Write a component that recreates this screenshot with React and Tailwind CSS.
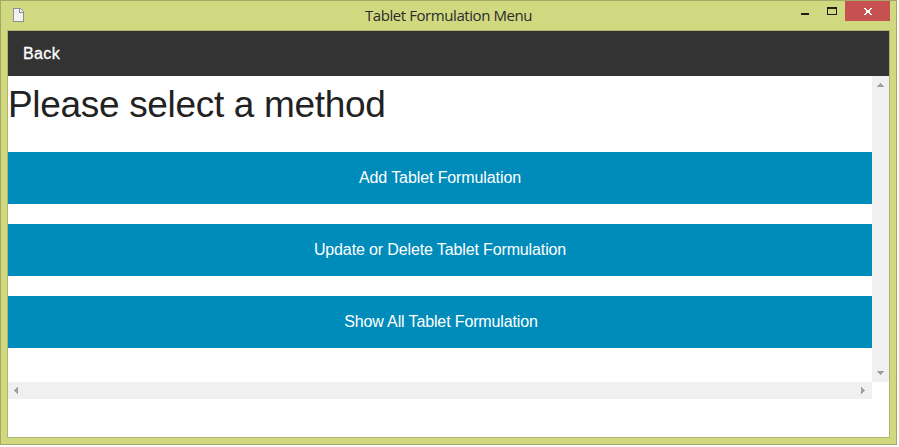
const actions = [
  { label: "Add Tablet Formulation", tracking: "tracking-[-0.1px]" },
  { label: "Update or Delete Tablet Formulation", tracking: "tracking-[-0.13px]" },
  { label: "Show All Tablet Formulation", tracking: "tracking-[-0.13px] pl-0.5" },
];

function TitleBar() {
  return (
    <header className="flex h-[29px] items-start">
      <div className="flex w-[132px] shrink-0 pt-[7px] pl-3">
        <svg width="11" height="14" viewBox="0 0 11 14" shapeRendering="crispEdges" aria-hidden="true">
          <path d="M0 0h7l4 4v10H0z" fill="#8f8f8f" />
          <path d="M1 1h5v4h4v8H1z" fill="#f2f2f2" />
          <path d="M7 1h1v1h1v1h1v1H7z" fill="#f2f2f2" />
        </svg>
      </div>
      <h1 className="flex-1 pt-1 pl-[6px] text-center font-['Open_Sans',sans-serif] text-[15px] leading-5 tracking-[-0.42px] whitespace-nowrap text-[#2b2b2b]">
        Tablet Formulation Menu
      </h1>
      <div className="flex h-5 w-[138px] shrink-0 justify-end pr-1.5">
        <button className="flex h-5 w-7 justify-center pt-3 pr-[1px]" aria-label="Minimize">
          <span className="h-0.5 w-2 bg-[#1f1f1f]" />
        </button>
        <button className="flex h-5 w-[26px] justify-center pt-1.5" aria-label="Maximize">
          <span className="h-2 w-2.5 border border-t-2 border-[#1f1f1f]" />
        </button>
        <button className="flex h-5 w-[45px] justify-center bg-[#c75050] pt-[7px] pl-px" aria-label="Close">
          <svg width="8" height="7" viewBox="0 0 8 7" shapeRendering="crispEdges">
            <path d="M0 0h2v1h1v1h2V1h1V0h2v1H7v1H6v3h1v1h1v1H6V6H5V5H3v1H2v1H0V6h1V5h1V2H1V1H0z" fill="#fff" />
          </svg>
        </button>
      </div>
    </header>
  );
}

function Arrow({ className }) {
  return (
    <svg width="7" height="4" viewBox="0 0 7 4" shapeRendering="crispEdges" className={className} aria-hidden="true">
      <path d="M3 0h1v1h1v1h1v1h1v1H0V3h1V2h1V1h1z" fill="#a0a0a0" />
    </svg>
  );
}

function SideArrow({ className }) {
  return (
    <svg width="4" height="7" viewBox="0 0 4 7" shapeRendering="crispEdges" className={className} aria-hidden="true">
      <path d="M0 3h1V2h1V1h1V0h1v7H3V6H2V5H1V4H0z" fill="#a0a0a0" />
    </svg>
  );
}

export default function App() {
  return (
    <div className="h-[447px] w-[899px] overflow-hidden bg-white">
      <div className="h-[445px] w-[897px] border border-[#a3a866] bg-[#d1d980]">
        <TitleBar />
        <div className="ml-1.5 h-[408px] w-[883px] border border-[#afb76c] bg-white font-['Liberation_Sans',Arial,sans-serif]">
          <nav className="flex h-[45px] items-center bg-[#333333] pl-[15px]">
            <a className="text-base leading-6 tracking-[0.4px] text-white [-webkit-text-stroke:0.3px_white]">Back</a>
          </nav>
          <div className="flex h-[306px]">
            <main className="w-[864px]">
              <h2 className="h-[76px] pt-1 text-[37px] leading-[50px] tracking-[-0.32px] whitespace-nowrap text-[#222222]">
                Please select a method
              </h2>
              <div className="flex flex-col gap-5">
                {actions.map(({ label, tracking }) => (
                  <button key={label} className={`h-[52px] bg-[#008cba] text-center text-base leading-6 text-white ${tracking}`}>
                    {label}
                  </button>
                ))}
              </div>
            </main>
            <div className="flex w-[17px] flex-col items-center justify-between bg-[#f0f0f0] pt-[7px] pb-[7px]">
              <Arrow />
              <Arrow className="rotate-180" />
            </div>
          </div>
          <div className="flex h-[17px] w-[864px] items-center justify-between bg-[#f0f0f0] pr-[7px] pl-1.5">
            <SideArrow />
            <SideArrow className="rotate-180" />
          </div>
        </div>
      </div>
    </div>
  );
}
